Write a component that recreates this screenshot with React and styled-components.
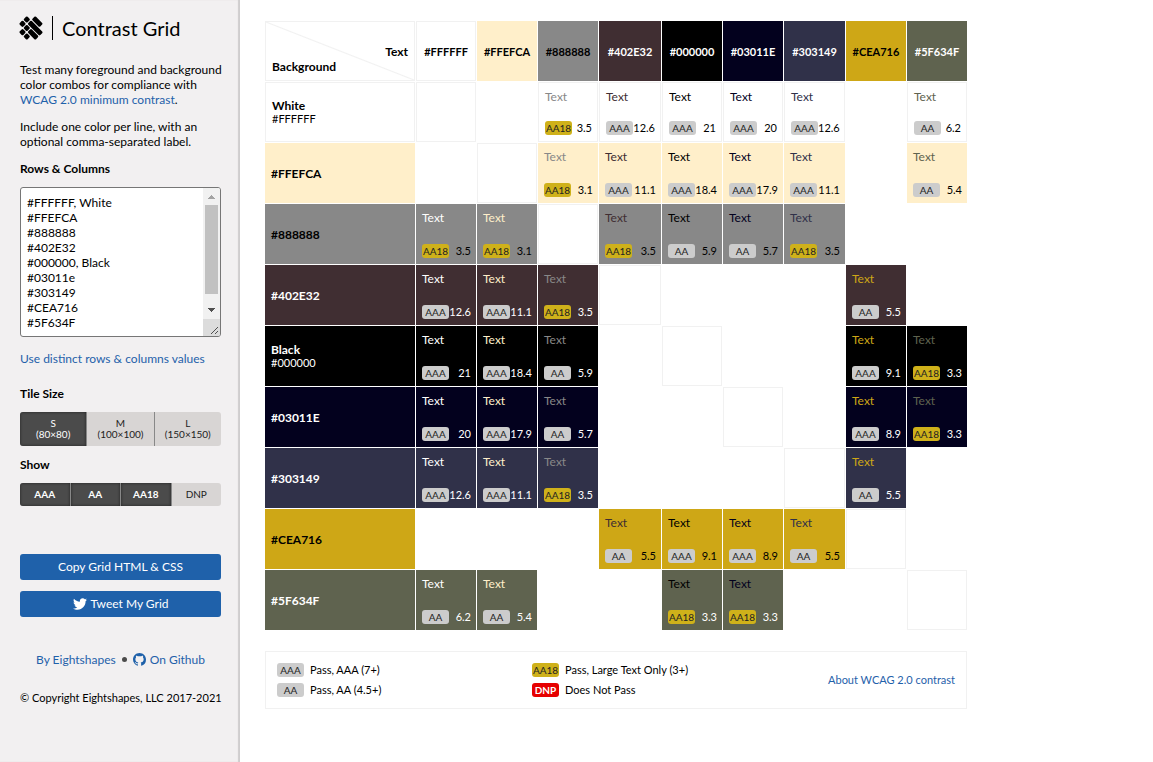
import React, { useState } from "react";
import styled, { createGlobalStyle, css } from "styled-components";

const GlobalStyle = createGlobalStyle`
  *, *::before, *::after { box-sizing: border-box; }
  html, body, #root { min-height: 100vh; }
  body {
    margin: 0;
    background: #fff;
    color: #000;
    font: 400 12px/15px Lato, "Open Sans", sans-serif;
  }
  a { color: #1f61aa; text-decoration: none; }
  p, h1, h2 { margin: 0; }
`;

const Page = styled.div`
  display: flex;
  min-height: 100vh;
`;

const Sidebar = styled.aside`
  flex: none;
  width: 240px;
  padding: 16px 19px 16px 20px;
  background: #f2f0f1;
  box-shadow: inset -2px 0 1px #cfcdce;
`;

const Brand = styled.header`
  display: flex;
  align-items: center;
  height: 24px;
  margin-bottom: 22px;
`;

const Logo = styled.svg`
  width: 22px;
  height: 22px;
  overflow: visible;
`;

const Title = styled.h1`
  margin-left: 10px;
  padding-left: 9px;
  border-left: 1px solid #000;
  font-size: 20px;
  line-height: 24px;
  font-weight: 400;
`;

const Copy = styled.p`
  margin: 0 -10px 12px 0;
`;

const Heading = styled.label`
  display: block;
  font-weight: 700;
`;

const GroupHeading = styled.h2`
  font-size: 12px;
  line-height: 15px;
  font-weight: 700;
`;

const InputFrame = styled.div`
  display: flex;
  height: 150px;
  margin: 11px 0 14px;
  border: 1px solid #767676;
  border-radius: 3px;
  background: #fff;
  overflow: hidden;
`;

const ColorInput = styled.textarea`
  flex: 1;
  min-width: 0;
  padding: 7px 6px;
  border: 0;
  background: transparent;
  color: #000;
  font: inherit;
  resize: none;
  outline: none;
`;

const ScrollBar = styled.svg`
  flex: none;
  width: 17px;
  height: 148px;
`;

const Group = styled.section`
  margin-top: ${(p) => p.$gap}px;
`;

const Segments = styled.div`
  display: flex;
  margin-top: 11px;
  border-radius: 3px;
  overflow: hidden;
`;

const Segment = styled.button`
  flex: 1;
  height: ${(p) => (p.$tall ? 34 : 23)}px;
  padding: 0;
  border: 0;
  border-left: ${(p) => (p.$first ? "0" : "1px solid #888")};
  background: #d8d5d4;
  color: #222;
  font: 400 10px/11px Lato, sans-serif;
  ${(p) =>
    p.$on &&
    css`
      background: #4b4b4b;
      color: #fff;
      font-weight: ${p.$tall ? 400 : 700};
      box-shadow: inset 0 0 3px #222;
    `}
`;

const Actions = styled.div`
  display: grid;
  gap: 11px;
  margin-top: 48px;
`;

const Action = styled.button`
  display: flex;
  align-items: center;
  justify-content: center;
  gap: 4px;
  height: 26px;
  padding: 0;
  border: 0;
  border-radius: 3px;
  background: #1f61aa;
  color: #fff;
  font: 400 12px/16px Lato, sans-serif;
`;

const Icon = styled.svg`
  width: 14px;
  height: 14px;
  fill: currentColor;
`;

const SmallIcon = styled(Icon)`
  width: 13px;
  height: 13px;
`;

const Credits = styled.footer`
  margin-top: 35px;
  text-align: center;
`;

const CreditLinks = styled.div`
  display: flex;
  align-items: center;
  justify-content: center;
  gap: 6px;
  margin-bottom: 23px;
`;

const CreditLink = styled.a`
  display: flex;
  align-items: center;
  gap: 4px;
`;

const Dot = styled.span`
  width: 5px;
  height: 5px;
  border-radius: 50%;
  background: #4b4b4b;
`;

const Copyright = styled.p`
  font-size: 11px;
  white-space: nowrap;
`;

const Main = styled.main`
  width: max-content;
  padding: 20px 24px;
`;

const Grid = styled.table`
  border-collapse: separate;
  border-spacing: 1px;
  table-layout: fixed;
  width: 704px;
`;

const Col = styled.col`
  width: ${(p) => p.$w}px;
`;

const frame = css`
  border: 1px solid #f1f1f1;
`;

const Corner = styled.th`
  ${frame}
  height: 60px;
  padding: 16px 6px 0;
  background: linear-gradient(to top right, transparent 49%, #f1f1f1 50%, transparent 51%);
`;

const CornerText = styled.div`
  text-align: right;
`;

const CornerBackground = styled.div`
  text-align: left;
`;

const ColumnHead = styled.th`
  height: 60px;
  padding: 0;
  background: ${(p) => p.$bg};
  color: ${(p) => p.$fg};
  font-size: 11px;
  font-weight: 700;
  text-align: center;
  ${(p) => p.$framed && frame}
`;

const RowHead = styled.th`
  height: 60px;
  padding: 0 6px;
  background: ${(p) => p.$bg};
  color: ${(p) => p.$fg};
  text-align: left;
  line-height: 13px;
  font-weight: 700;
  ${(p) => p.$framed && frame}
`;

const Hex = styled.div`
  font-size: 11px;
  font-weight: 400;
`;

const Cell = styled.td`
  height: 60px;
  padding: 0;
  background: ${(p) => p.$bg};
  ${(p) => p.$framed && frame}
`;

const Tile = styled.div`
  display: flex;
  flex-direction: column;
  justify-content: space-between;
  height: ${(p) => (p.$framed ? 58 : 60)}px;
  padding: 6px 5px 6px 6px;
`;

const Sample = styled.span`
  color: ${(p) => p.$fg};
`;

const Result = styled.div`
  display: flex;
  align-items: center;
  justify-content: space-between;
  height: 14px;
  color: ${(p) => p.$fg};
  font-size: 11px;
  line-height: 14px;
`;

const badgeColors = {
  AAA: ["#ccc", "#222"],
  AA: ["#ccc", "#222"],
  AA18: ["#cfb11a", "#222"],
  DNP: ["#e60000", "#fff"],
};

const Badge = styled.span`
  flex: none;
  width: 27px;
  height: 14px;
  border-radius: 3px;
  background: ${(p) => badgeColors[p.$level][0]};
  color: ${(p) => badgeColors[p.$level][1]};
  font-size: 10px;
  line-height: 14px;
  font-weight: ${(p) => (p.$level === "DNP" ? 700 : 400)};
  text-align: center;
`;

const Legend = styled.section`
  display: flex;
  align-items: center;
  height: 58px;
  margin: 20px 1px 0;
  padding: 0 11px;
  ${frame}
  font-size: 11px;
  line-height: 14px;
`;

const LegendColumn = styled.div`
  display: grid;
  gap: 6px;
  width: 255px;
`;

const LegendItem = styled.div`
  display: flex;
  align-items: center;
  gap: 6px;
  height: 14px;
`;

const LegendLink = styled.a`
  margin-left: auto;
`;

const colors = [
  { hex: "#FFFFFF", label: "White" },
  { hex: "#FFEFCA" },
  { hex: "#888888" },
  { hex: "#402E32" },
  { hex: "#000000", label: "Black" },
  { hex: "#03011E" },
  { hex: "#303149" },
  { hex: "#CEA716" },
  { hex: "#5F634F" },
];

const columnWidths = [150, 60, 60, 60, 62, 60, 60, 61, 60, 60];

const ratios = [
  ["", "", "3.5", "12.6", "21", "20", "12.6", "", "6.2"],
  ["", "", "3.1", "11.1", "18.4", "17.9", "11.1", "", "5.4"],
  ["3.5", "3.1", "", "3.5", "5.9", "5.7", "3.5", "", ""],
  ["12.6", "11.1", "3.5", "", "", "", "", "5.5", ""],
  ["21", "18.4", "5.9", "", "", "", "", "9.1", "3.3"],
  ["20", "17.9", "5.7", "", "", "", "", "8.9", "3.3"],
  ["12.6", "11.1", "3.5", "", "", "", "", "5.5", ""],
  ["", "", "", "5.5", "9.1", "8.9", "5.5", "", ""],
  ["6.2", "5.4", "", "", "3.3", "3.3", "", "", ""],
];

const darkColors = ["#402E32", "#000000", "#03011E", "#303149", "#5F634F"];
const readable = (hex) => (darkColors.includes(hex) ? "#fff" : "#000");
const levelOf = (ratio) => (ratio >= 7 ? "AAA" : ratio >= 4.5 ? "AA" : "AA18");

const initialText = `#FFFFFF, White
#FFEFCA
#888888
#402E32
#000000, Black
#03011e
#303149
#CEA716
#5F634F`;

const sizes = [
  ["S", "(80×80)"],
  ["M", "(100×100)"],
  ["L", "(150×150)"],
];

/* Each shape: lattice centre of its upper-left end, and how many steps it runs down-right. */
const logoShapes = [
  [6.8, 2.5, 0],
  [2.5, 6.8, 0],
  [6.8, 11, 0],
  [2.5, 15.2, 0],
  [6.8, 19.5, 0],
  [11, 6.8, 2],
  [15.2, 2.5, 1],
  [11, 15.2, 1],
];

function BrandMark() {
  return (
    <Logo viewBox="0 0 22 22" aria-hidden="true">
      {logoShapes.map(([x, y, steps]) => (
        <rect
          key={`${x}-${y}`}
          transform={`translate(${x} ${y}) rotate(45)`}
          x="-2.5"
          y="-2.5"
          width={5 + steps * 6}
          height="5"
          rx="1.2"
        />
      ))}
    </Logo>
  );
}

function InputScrollBar() {
  return (
    <ScrollBar viewBox="0 0 17 148" aria-hidden="true" shapeRendering="crispEdges">
      <rect width="17" height="131" fill="#f1f1f1" />
      <rect x="2" y="17" width="13" height="89" fill="#c1c1c1" />
      <path d="M5 11h7L8.5 7z" fill="#a3a3a3" />
      <path d="M5 120h7l-3.5 4z" fill="#505050" />
      <rect y="131" width="17" height="17" fill="#dcdcdc" />
      <path d="M8 146l7-7M12 146l3-3" stroke="#505050" shapeRendering="auto" />
    </ScrollBar>
  );
}

function GridCell({ bg, fg, ratio, same }) {
  if (!ratio) return <Cell $bg="#fff" $framed={same} />;
  const framed = bg === "#FFFFFF";
  return (
    <Cell $bg={bg} $framed={framed}>
      <Tile $framed={framed}>
        <Sample $fg={fg}>Text</Sample>
        <Result $fg={readable(bg)}>
          <Badge $level={levelOf(Number(ratio))}>{levelOf(Number(ratio))}</Badge>
          <span>{ratio}</span>
        </Result>
      </Tile>
    </Cell>
  );
}

export default function App() {
  const [text, setText] = useState(initialText);
  const [size, setSize] = useState("S");
  const [shown, setShown] = useState(["AAA", "AA", "AA18"]);
  const toggle = (level) =>
    setShown((now) => (now.includes(level) ? now.filter((l) => l !== level) : [...now, level]));

  return (
    <>
      <GlobalStyle />
      <Page>
        <Sidebar>
          <Brand>
            <BrandMark />
            <Title>Contrast Grid</Title>
          </Brand>
          <Copy>
            Test many foreground and background color combos for compliance with{" "}
            <a href="#wcag">WCAG 2.0 minimum contrast</a>.
          </Copy>
          <Copy>Include one color per line, with an optional comma-separated label.</Copy>
          <Heading htmlFor="colors">Rows &amp; Columns</Heading>
          <InputFrame>
            <ColorInput
              id="colors"
              spellCheck="false"
              value={text}
              onChange={(e) => setText(e.target.value)}
            />
            <InputScrollBar />
          </InputFrame>
          <a href="#distinct">Use distinct rows &amp; columns values</a>
          <Group $gap={20}>
            <GroupHeading>Tile Size</GroupHeading>
            <Segments>
              {sizes.map(([name, detail], i) => (
                <Segment key={name} $tall $first={i === 0} $on={size === name} onClick={() => setSize(name)}>
                  {name}
                  <br />
                  {detail}
                </Segment>
              ))}
            </Segments>
          </Group>
          <Group $gap={11}>
            <GroupHeading>Show</GroupHeading>
            <Segments>
              {["AAA", "AA", "AA18", "DNP"].map((level, i) => (
                <Segment key={level} $first={i === 0} $on={shown.includes(level)} onClick={() => toggle(level)}>
                  {level}
                </Segment>
              ))}
            </Segments>
          </Group>
          <Actions>
            <Action>Copy Grid HTML &amp; CSS</Action>
            <Action>
              <Icon viewBox="0 0 512 512" aria-hidden="true">
                <path d="M459.37 151.716c.325 4.548.325 9.097.325 13.645 0 138.72-105.583 298.558-298.558 298.558-59.452 0-114.68-17.219-161.137-47.106 8.447.974 16.568 1.299 25.34 1.299 49.055 0 94.213-16.568 130.274-44.832-46.132-.975-84.792-31.188-98.112-72.772 6.498.974 12.995 1.624 19.818 1.624 9.421 0 18.843-1.3 27.614-3.573-48.081-9.747-84.143-51.98-84.143-102.985v-1.299c13.969 7.797 30.214 12.67 47.431 13.319-28.264-18.843-46.781-51.005-46.781-87.391 0-19.492 5.197-37.36 14.294-52.954 51.655 63.675 129.3 105.258 216.365 109.807-1.624-7.797-2.599-15.918-2.599-24.04 0-57.828 46.782-104.934 104.934-104.934 30.213 0 57.502 12.67 76.67 33.137 23.715-4.548 46.456-13.32 66.599-25.34-7.798 24.366-24.366 44.833-46.132 57.827 21.117-2.273 41.584-8.122 60.426-16.243-14.292 20.791-32.161 39.308-52.628 54.253z" />
              </Icon>
              Tweet My Grid
            </Action>
          </Actions>
          <Credits>
            <CreditLinks>
              <CreditLink href="#eightshapes">By Eightshapes</CreditLink>
              <Dot />
              <CreditLink href="#github">
                <SmallIcon viewBox="0 0 16 16" aria-hidden="true">
                  <path d="M8 0C3.58 0 0 3.58 0 8c0 3.54 2.29 6.53 5.47 7.59.4.07.55-.17.55-.38 0-.19-.01-.82-.01-1.49-2.01.37-2.53-.49-2.69-.94-.09-.23-.48-.94-.82-1.13-.28-.15-.68-.52-.01-.53.63-.01 1.08.58 1.23.82.72 1.21 1.87.87 2.33.66.07-.52.28-.87.51-1.07-1.78-.2-3.64-.89-3.64-3.95 0-.87.31-1.59.82-2.15-.08-.2-.36-1.02.08-2.12 0 0 .67-.21 2.2.82.64-.18 1.32-.27 2-.27s1.36.09 2 .27c1.53-1.04 2.2-.82 2.2-.82.44 1.1.16 1.92.08 2.12.51.56.82 1.27.82 2.15 0 3.07-1.87 3.75-3.65 3.95.29.25.54.73.54 1.48 0 1.07-.01 1.93-.01 2.2 0 .21.15.46.55.38A8.01 8.01 0 0 0 16 8c0-4.42-3.58-8-8-8z" />
                </SmallIcon>
                On Github
              </CreditLink>
            </CreditLinks>
            <Copyright>© Copyright Eightshapes, LLC 2017-2021</Copyright>
          </Credits>
        </Sidebar>
        <Main>
          <Grid>
            <colgroup>
              {columnWidths.map((w, i) => (
                <Col key={i} $w={w} />
              ))}
            </colgroup>
            <thead>
              <tr>
                <Corner>
                  <CornerText>Text</CornerText>
                  <CornerBackground>Background</CornerBackground>
                </Corner>
                {colors.map(({ hex }) => (
                  <ColumnHead key={hex} scope="col" $bg={hex} $fg={readable(hex)} $framed={hex === "#FFFFFF"}>
                    {hex}
                  </ColumnHead>
                ))}
              </tr>
            </thead>
            <tbody>
              {colors.map(({ hex, label }, r) => (
                <tr key={hex}>
                  <RowHead scope="row" $bg={hex} $fg={readable(hex)} $framed={hex === "#FFFFFF"}>
                    {label || hex}
                    {label && <Hex>{hex}</Hex>}
                  </RowHead>
                  {colors.map((column, c) => (
                    <GridCell key={column.hex} bg={hex} fg={column.hex} ratio={ratios[r][c]} same={r === c} />
                  ))}
                </tr>
              ))}
            </tbody>
          </Grid>
          <Legend>
            <LegendColumn>
              <LegendItem><Badge $level="AAA">AAA</Badge>Pass, AAA (7+)</LegendItem>
              <LegendItem><Badge $level="AA">AA</Badge>Pass, AA (4.5+)</LegendItem>
            </LegendColumn>
            <LegendColumn>
              <LegendItem><Badge $level="AA18">AA18</Badge>Pass, Large Text Only (3+)</LegendItem>
              <LegendItem><Badge $level="DNP">DNP</Badge>Does Not Pass</LegendItem>
            </LegendColumn>
            <LegendLink href="#about">About WCAG 2.0 contrast</LegendLink>
          </Legend>
        </Main>
      </Page>
    </>
  );
}
